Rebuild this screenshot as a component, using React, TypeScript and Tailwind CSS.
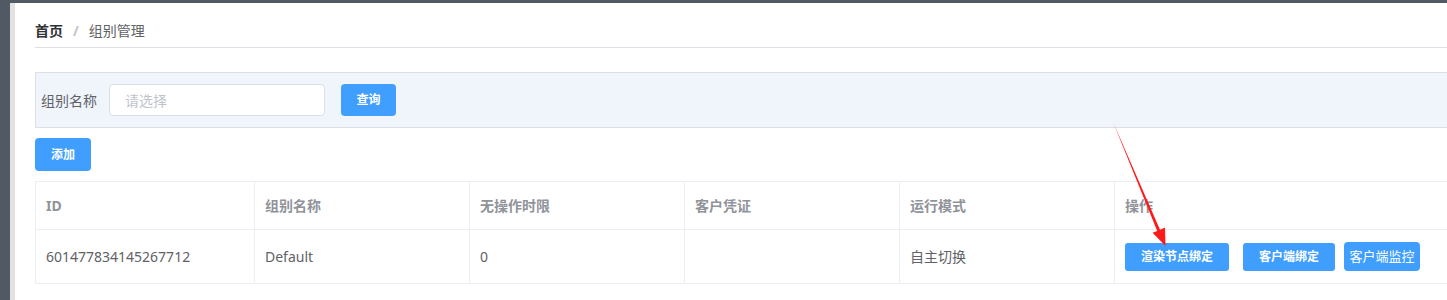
import * as React from "react";

const FONT = "font-['Noto_Sans','Noto_Sans_CJK_SC',sans-serif]";

type Row = {
  id: string;
  name: string;
  idle: string;
  credential: string;
  mode: string;
};

const COLUMNS = ["ID", "组别名称", "无操作时限", "客户凭证", "运行模式", "操作"];

const ROWS: Row[] = [
  {
    id: "601477834145267712",
    name: "Default",
    idle: "0",
    credential: "",
    mode: "自主切换",
  },
];

const GRID = "grid grid-cols-[219px_215px_215px_215px_215px_1fr]";

function Breadcrumb() {
  return (
    <div className="flex items-center pt-[20px] pb-[8px] border-b border-[#dcdfe6] text-[14px] leading-[16px]">
      <span className="font-bold text-[#303133]">首页</span>
      <span className="mx-[10px] text-[#c0c4cc] font-bold">/</span>
      <span className="text-[#606266]">组别管理</span>
    </div>
  );
}

function FilterBar() {
  return (
    <div className="mt-[24px] flex h-[56px] items-center border border-[#dcdfe6] bg-[#f0f4fb] pl-[5px]">
      <label className="text-[14px] text-[#606266]">组别名称</label>
      <div className="ml-[12px] flex h-[32px] w-[216px] items-center rounded-[4px] border border-[#dcdfe6] bg-white pl-[15px] text-[14px] text-[#c0c4cc]">
        请选择
      </div>
      <button
        type="button"
        className="ml-[16px] h-[32px] w-[55px] rounded-[4px] bg-[#409eff] text-[12px] font-bold text-white"
      >
        查询
      </button>
    </div>
  );
}

function GroupTable() {
  return (
    <div className="mt-[10px] border border-[#ebeef5]">
      <div className={`${GRID} h-[48px] border-b border-[#ebeef5]`}>
        {COLUMNS.map((c, i) => (
          <div
            key={c}
            className={`flex items-center pl-[10px] text-[14px] font-bold text-[#909399] ${
              i < COLUMNS.length - 1 ? "border-r border-[#ebeef5]" : ""
            }`}
          >
            {c}
          </div>
        ))}
      </div>
      {ROWS.map((r) => (
        <div key={r.id} className={`${GRID} h-[53px]`}>
          {[r.id, r.name, r.idle, r.credential, r.mode].map((v, i) => (
            <div
              key={`cell-${i}`}
              className="flex items-center border-r border-[#ebeef5] pl-[10px] text-[14px] text-[#606266]"
            >
              {v}
            </div>
          ))}
          <div className="flex items-center pl-[10px]">
            <button
              type="button"
              className="h-[28px] w-[104px] rounded-[3px] bg-[#409eff] text-[12px] font-bold text-white"
            >
              渲染节点绑定
            </button>
            <button
              type="button"
              className="ml-[14px] h-[28px] w-[92px] rounded-[3px] bg-[#409eff] text-[12px] font-bold text-white"
            >
              客户端绑定
            </button>
            <button
              type="button"
              className="ml-[9px] h-[29px] w-[76px] rounded-[4px] bg-[#409eff] text-[13px] text-white"
            >
              客户端监控
            </button>
          </div>
        </div>
      ))}
    </div>
  );
}

export default function App() {
  return (
    <div className={`relative flex h-[300px] w-full overflow-hidden bg-[#515a62] ${FONT}`}>
      <div className="w-[10px] shrink-0" />
      <div className="mt-[3px] flex-1 overflow-hidden border-l-[5px] border-[#e2e2e2] bg-white pl-[20px]">
        <div className="w-[1440px]">
          <Breadcrumb />
          <FilterBar />
          <button
            type="button"
            className="mt-[10px] h-[33px] w-[56px] rounded-[4px] bg-[#409eff] text-[12px] font-bold text-white"
          >
            添加
          </button>
          <GroupTable />
        </div>
      </div>

      {/* annotation arrow */}
      <svg
        className="pointer-events-none absolute left-0 top-0"
        width="1447"
        height="300"
        viewBox="0 0 1447 300"
      >
        <path
          d="M1113 122 L1160 229.8 L1165 227.6 L1165.5 246 L1152.6 232.8 L1157.2 231 Z"
          fill="#ff1a1a"
        />
      </svg>
    </div>
  );
}
